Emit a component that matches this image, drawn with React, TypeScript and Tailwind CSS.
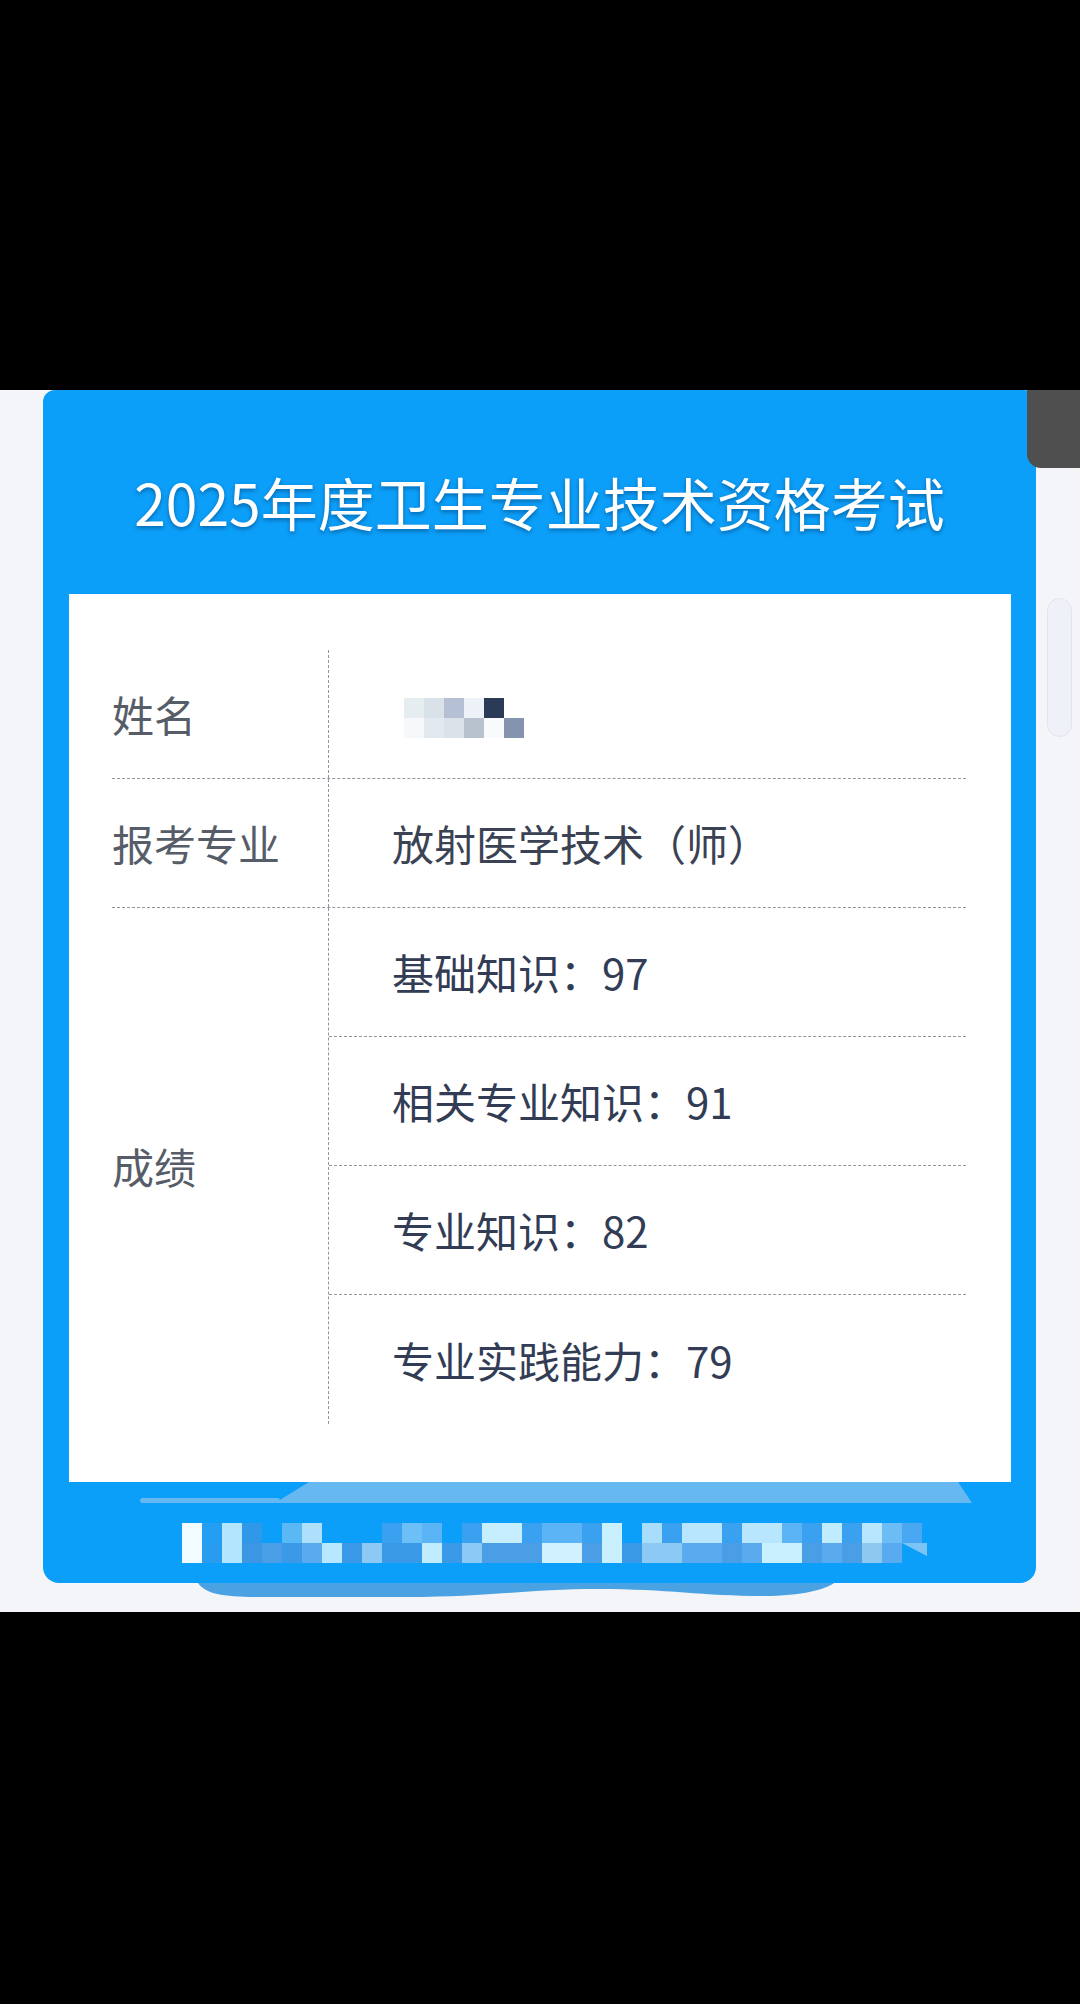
import React from 'react';

const nameMosaic: (string | null)[][] = [
  ['#e6edf1', '#d9e1e9', '#b6c0d5', '#edf2f8', '#2b3a57', null],
  ['#f6f8fa', '#e1e8f0', '#dbe2e9', '#b8c2ce', '#f8fafc', '#8494ae'],
];

// blurred footer text, two rows of 20px blocks
const footTop: (string | null)[] = [
  '#f2fbff', '#239ef2', '#b3e5ff', '#2f98e8', null, '#5ab8f5', '#aee0fb', null, null, null,
  '#3aa0f0', '#6cc0f7', '#5ab4f5', null, '#3aa0f0', '#c6eeff', '#c6eeff', '#3aa0f0', '#5ab4f5', '#5ab4f5',
  '#3aa0f0', '#c8f0ff', null, '#a8ddfb', '#3aa0f0', '#b8e6ff', '#b8e6ff', '#3aa0f0', '#b8e6ff', '#b8e6ff',
  '#5ab4f5', '#3aa0f0', '#c0ecff', '#3aa0f0', '#b8e6ff', '#6cbcf5', '#4aa8f2',
];
const footBottom: (string | null)[] = [
  '#f2fbff', '#2a9cf0', '#b3e5ff', '#3b97e4', '#4a9ee6', '#3a9ae8', '#5aaaf0', '#b8e8ff', '#3a9ae8', '#8ccaf5',
  '#3a9ae8', '#3a9ae8', '#c0ecff', '#3a9ae8', '#8ccaf5', '#4a9ee6', '#4a9ee6', '#4a9ee6', '#d0f2ff', '#d0f2ff',
  '#4a9ee6', '#c8f0ff', '#3a9ae8', '#8ccaf5', '#8ccaf5', '#5aaaf0', '#5aaaf0', '#4a9ee6', '#5aaaf0', '#c8f0ff',
  '#c8f0ff', '#4a9ee6', '#5aaaf0', '#4a9ee6', '#8cc8f0', '#5aaaf0', null,
];

const scores = ['基础知识：97', '相关专业知识：91', '专业知识：82', '专业实践能力：79'];

const NameMosaic = () => (
  <svg width="136" height="40" viewBox="0 0 136 40">
    {nameMosaic.map((row, r) =>
      row.map((c, i) =>
        c ? <rect key={`${r}-${i}`} x={12 + i * 20} y={r * 20} width="20" height="20" fill={c} /> : null
      )
    )}
  </svg>
);

const FooterArt = () => (
  <svg className="absolute left-0 top-0" width="993" height="101" viewBox="0 0 993 101">
    <polygon points="266,0 915,0 929,21 232,21" fill="#66b8f0" />
    <rect x="97" y="16" width="140" height="5" rx="2.5" fill="#66b8f0" />
    {footTop.map((c, i) =>
      c ? <rect key={`t${i}`} x={139 + i * 20} y="41" width="20" height="20" fill={c} /> : null
    )}
    {footBottom.map((c, i) =>
      c ? <rect key={`b${i}`} x={139 + i * 20} y="61" width="20" height="20" fill={c} /> : null
    )}
    <polygon points="859,61 884,61 884,74" fill="#7cc4f5" />
  </svg>
);

export default function App() {
  return (
    <div className="w-[1080px] h-[2004px] bg-black flex flex-col font-['Noto_Sans_CJK_SC','Noto_Sans',sans-serif]">
      <div className="h-[390px] shrink-0" />

      <div className="relative h-[1222px] shrink-0 bg-[#f3f5f8]">
        {/* card */}
        <div className="relative ml-[43px] w-[993px] h-[1193px] flex flex-col rounded-t-[12px] rounded-b-[16px] bg-[#0c9ff9]">
          <div className="h-[204px] shrink-0 flex items-center justify-center pt-[18px]">
            <h1 className="text-[57px] leading-none text-white font-normal [text-shadow:0_2px_4px_rgba(0,30,70,0.45)]">
              2025年度卫生专业技术资格考试
            </h1>
          </div>

          <div className="ml-[26px] w-[942px] h-[888px] shrink-0 bg-white px-[43px] pt-[56px]">
            <div className="w-[854px] text-[42px] leading-none">
              <div className="flex h-[129px] border-b border-dashed border-[#9096a0]">
                <div className="w-[216px] flex items-center text-[#575d68]">姓名</div>
                <div className="flex-1 flex items-center pl-[63px] border-l border-dashed border-[#9096a0]">
                  <div className="mt-[7px]">
                    <NameMosaic />
                  </div>
                </div>
              </div>

              <div className="flex h-[129px] border-b border-dashed border-[#9096a0]">
                <div className="w-[216px] flex items-center text-[#575d68]">报考专业</div>
                <div className="flex-1 flex items-center pl-[63px] border-l border-dashed border-[#9096a0] text-[#3a4253]">
                  放射医学技术（师）
                </div>
              </div>

              <div className="flex">
                <div className="w-[216px] flex items-center text-[#575d68]">成绩</div>
                <div className="flex-1 flex flex-col border-l border-dashed border-[#9096a0]">
                  {scores.map((s, i) => (
                    <div
                      key={s}
                      className={
                        i < scores.length - 1
                          ? 'h-[129px] flex items-center pl-[63px] border-b border-dashed border-[#9096a0] text-[#323d55]'
                          : 'h-[129px] flex items-center pl-[63px] text-[#323d55]'
                      }
                    >
                      {s}
                    </div>
                  ))}
                </div>
              </div>
            </div>
          </div>

          <div className="relative flex-1">
            <FooterArt />
          </div>

          {/* blob peeking out under the card */}
          <svg className="absolute left-[155px] top-full" width="640" height="16" viewBox="0 0 640 16">
            <path
              d="M0,0 C8,11 25,14 60,14 L210,14 C290,14 330,6 400,6 C470,6 505,13 565,13 C605,13 628,6 636,0 Z"
              fill="#4aa2e2"
            />
          </svg>
        </div>

        {/* overlay at top right */}
        <div className="absolute right-0 top-0 w-[53px] h-[78px] rounded-bl-[14px] bg-[#4f4f4f]" />
        {/* scrollbar */}
        <div className="absolute left-[1047px] top-[208px] w-[25px] h-[139px] rounded-full bg-[#eef1f7] border border-[#e2e6ec]" />
      </div>

      <div className="flex-1" />
    </div>
  );
}
